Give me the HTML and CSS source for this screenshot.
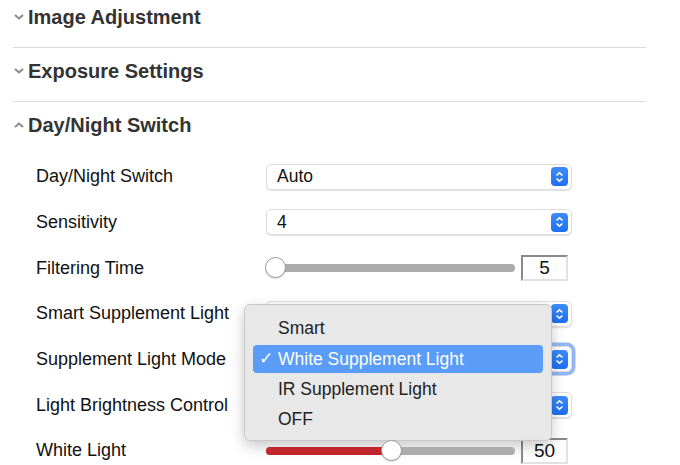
FILE: index.html
```html
<!DOCTYPE html>
<html>
<head>
<meta charset="utf-8">
<link rel="stylesheet" href="styles.css">
</head>
<body>
<div class="panel">
  <div class="section-head">
    <svg class="chev" width="10" height="6" viewBox="0 0 10 6"><path d="M1 1 L5 4.5 L9 1" fill="none" stroke="#8a8a8a" stroke-width="2"/></svg>
    <span>Image Adjustment</span>
  </div>
  <div class="section-head">
    <svg class="chev" width="10" height="6" viewBox="0 0 10 6"><path d="M1 1 L5 4.5 L9 1" fill="none" stroke="#8a8a8a" stroke-width="2"/></svg>
    <span>Exposure Settings</span>
  </div>
  <div class="section-head open">
    <svg class="chev" width="10" height="6" viewBox="0 0 10 6"><path d="M1 5 L5 1.5 L9 5" fill="none" stroke="#8a8a8a" stroke-width="2"/></svg>
    <span>Day/Night Switch</span>
  </div>

  <div class="rows">
    <div class="row">
      <div class="label">Day/Night Switch</div>
      <div class="select"><span>Auto</span><span class="stepper"><svg width="9" height="12" viewBox="0 0 9 12"><path d="M1.5 4.5 L4.5 1.8 L7.5 4.5 M1.5 7.5 L4.5 10.2 L7.5 7.5" fill="none" stroke="#fff" stroke-width="1.6"/></svg></span></div>
    </div>
    <div class="row">
      <div class="label">Sensitivity</div>
      <div class="select"><span>4</span><span class="stepper"><svg width="9" height="12" viewBox="0 0 9 12"><path d="M1.5 4.5 L4.5 1.8 L7.5 4.5 M1.5 7.5 L4.5 10.2 L7.5 7.5" fill="none" stroke="#fff" stroke-width="1.6"/></svg></span></div>
    </div>
    <div class="row">
      <div class="label">Filtering Time</div>
      <div class="slider-wrap">
        <div class="track"><div class="fill" style="width:0%"></div><div class="thumb start" style="left:0%"></div></div>
        <div class="num">5</div>
      </div>
    </div>
    <div class="row">
      <div class="label">Smart Supplement Light</div>
      <div class="select"><span></span><span class="stepper"><svg width="9" height="12" viewBox="0 0 9 12"><path d="M1.5 4.5 L4.5 1.8 L7.5 4.5 M1.5 7.5 L4.5 10.2 L7.5 7.5" fill="none" stroke="#fff" stroke-width="1.6"/></svg></span></div>
    </div>
    <div class="row">
      <div class="label">Supplement Light Mode</div>
      <div class="ctrl">
        <div class="select focus"><span></span><span class="stepper"><svg width="9" height="12" viewBox="0 0 9 12"><path d="M1.5 4.5 L4.5 1.8 L7.5 4.5 M1.5 7.5 L4.5 10.2 L7.5 7.5" fill="none" stroke="#fff" stroke-width="1.6"/></svg></span></div>
        <div class="menu">
          <div class="item">Smart</div>
          <div class="item selected"><span class="check">✓</span>White Supplement Light</div>
          <div class="item">IR Supplement Light</div>
          <div class="item">OFF</div>
        </div>
      </div>
    </div>
    <div class="row">
      <div class="label">Light Brightness Control</div>
      <div class="select"><span></span><span class="stepper"><svg width="9" height="12" viewBox="0 0 9 12"><path d="M1.5 4.5 L4.5 1.8 L7.5 4.5 M1.5 7.5 L4.5 10.2 L7.5 7.5" fill="none" stroke="#fff" stroke-width="1.6"/></svg></span></div>
    </div>
    <div class="row">
      <div class="label">White Light</div>
      <div class="slider-wrap">
        <div class="track"><div class="fill" style="width:50%"></div><div class="thumb" style="left:50%"></div></div>
        <div class="num">50</div>
      </div>
    </div>
  </div>
</div>
</body>
</html>
```

FILE: styles.css
```css
html, body {
  margin: 0;
  padding: 0;
  background: #ffffff;
  overflow: hidden;
}
body {
  font-family: "Liberation Sans", Arial, sans-serif;
  color: #111;
  width: 680px;
  height: 465px;
}
.panel {
  margin-top: -6px;
  margin-left: 13px;
  width: 633px;
}
.section-head {
  height: 54px;
  box-sizing: border-box;
  padding-top: 12px;
  border-bottom: 1px solid #dcdcdc;
  display: flex;
  align-items: flex-start;
  font-size: 20px;
  font-weight: bold;
  color: #333;
  line-height: 22px;
}
.section-head .chev {
  margin-left: 1px;
  margin-right: 4px;
  margin-top: 8px;
}
.section-head.open {
  border-bottom: none;
  height: 52px;
}
.rows {
  padding-left: 23px;
}
.row {
  height: 45.67px;
  display: flex;
  align-items: center;
  font-size: 18px;
}
.label {
  width: 230px;
  flex: none;
}
.ctrl {
  position: relative;
}
.select {
  width: 306px;
  height: 26px;
  box-sizing: border-box;
  border: 1px solid #dedede;
  border-radius: 5px;
  background: #fff;
  box-shadow: 0 1px 1px rgba(0,0,0,0.12);
  display: flex;
  align-items: center;
  justify-content: space-between;
  padding-left: 10px;
  padding-right: 3px;
  font-size: 17.5px;
  color: #111;
}
.select.focus {
  box-shadow: 0 0 0 3.5px rgba(110,160,240,0.75);
}
.stepper {
  width: 17px;
  height: 19px;
  border-radius: 4px;
  background: linear-gradient(#3d8cfb, #1f6ff2);
  display: flex;
  align-items: center;
  justify-content: center;
}
.stepper svg {
  display: block;
}
.slider-wrap {
  display: flex;
  align-items: center;
}
.track {
  position: relative;
  width: 249px;
  height: 8px;
  border-radius: 4px;
  background: #acacac;
}
.fill {
  height: 8px;
  border-radius: 4px 0 0 4px;
  background: #c1262c;
}
.thumb {
  position: absolute;
  top: -7px;
  width: 21px;
  height: 21px;
  box-sizing: border-box;
  margin-left: -10px;
  border-radius: 50%;
  background: #fff;
  border: 1px solid #9a9a9a;
  box-shadow: 0 1px 1px rgba(0,0,0,0.15);
}
.thumb.start {
  margin-left: -1px;
}
.num {
  margin-left: 6px;
  width: 47px;
  height: 26px;
  box-sizing: border-box;
  border-top: 2px solid #8a8a8a;
  border-left: 2px solid #8a8a8a;
  border-right: 2px solid #e2e2e2;
  border-bottom: 2px solid #e2e2e2;
  background: #fff;
  text-align: center;
  font-size: 19px;
  line-height: 22px;
  color: #111;
}
.menu {
  position: absolute;
  left: -22px;
  top: -42px;
  width: 308px;
  height: 137px;
  box-sizing: border-box;
  padding: 8px 8px 0 8px;
  background: rgba(232,232,232,0.98);
  border: 1px solid #c9c9c9;
  border-radius: 6px;
  box-shadow: 0 5px 14px rgba(0,0,0,0.22);
}
.item {
  position: relative;
  height: 30.3px;
  line-height: 30px;
  padding-left: 25px;
  font-size: 17.5px;
  color: #222;
  border-radius: 4px;
}
.item.selected {
  height: 28px;
  line-height: 28px;
  margin: 1px 0 1.3px 0;
  background: #5a9cf7;
  color: #fff;
}
.check {
  position: absolute;
  left: 6px;
  top: 0;
  font-size: 17px;
}
```
